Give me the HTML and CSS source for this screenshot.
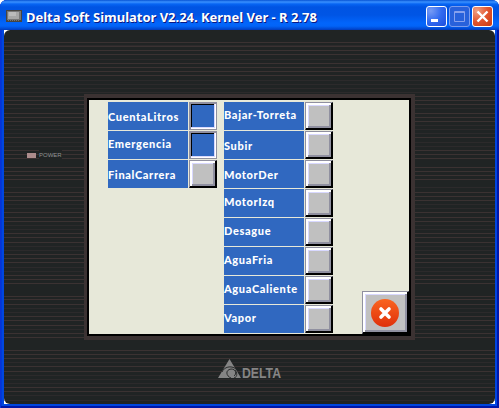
FILE: index.html
```html
<!DOCTYPE html>
<html lang="es">
<head>
<meta charset="utf-8">
<title>Delta Soft Simulator</title>
<link rel="stylesheet" href="styles.css">
</head>
<body>
<div class="window">
  <header class="titlebar">
    <svg class="app-icon" width="16" height="12" viewBox="0 0 16 12"><path fill="#474541" d="M0 0h16v12H0z"/><path fill="#777" d="M1 1h14v9H1z"/><path fill="#a7a7a7" d="M2 2h11v7H2z"/><path fill="#bbb" d="M3 2h7v4H3z"/><path stroke="#777" stroke-dasharray="1 1" d="M2 10.500h12"/></svg>
    <h1 class="title">Delta Soft Simulator V2.24. Kernel Ver - R 2.78</h1>
    <div class="controls">
      <button class="control" aria-label="Minimizar"><svg width="19" height="19"><path fill="#fff" d="M4 12h7v3H4z"/></svg></button>
      <button class="control disabled" aria-label="Maximizar"><svg width="19" height="19"><path fill="none" stroke="#87a1ed" d="M4.500 4.500h10v10h-10zM4 5.500h11"/></svg></button>
      <button class="control close" aria-label="Cerrar"><svg width="19" height="19"><path stroke="#fff" stroke-width="2.400" d="M4.500 4.500l10 10m0-10l-10 10"/></svg></button>
    </div>
  </header>
  <main class="device">
    <svg class="grooves" width="491" height="374" viewBox="4 30 491 374">
      <path stroke="#3b3232" d="M4 42.500h491M4 46.500h491M4 50.500h491M4 54.500h491M4 63.500h491M4 67.500h491M4 71.500h491M4 75.500h491M4 96.500h491M4 100.500h491M4 104.500h491M4 113.500h491M4 117.500h491M4 121.500h491M4 137.500h491M4 150.500h491M4 154.500h491M4 158.500h491M4 167.500h491M4 171.500h491M4 175.500h491M4 179.500h491M4 192.500h491M4 196.500h491M4 200.500h491M4 212.500h491M4 217.500h491M4 221.500h491M4 233.500h491M4 237.500h491M4 242.500h491M4 254.500h491M4 258.500h491M4 262.500h491M4 275.500h491M4 279.500h491M4 283.500h491M4 296.500h491M4 299.500h491M4 304.500h491M4 316.500h491M4 320.500h491M4 325.500h491M4 333.500h491M4 337.500h491M4 350.500h491M4 354.500h491M4 358.500h491M4 366.500h491M4 371.500h491M4 387.500h491M4 391.500h491"/>
      <path stroke="#2c2a2b" d="M4 45.500h491M4 59.500h491M4 80.500h491M4 84.500h491M4 88.500h491M4 92.500h491M4 108.500h491M4 125.500h491M4 129.500h491M4 133.500h491M4 142.500h491M4 146.500h491M4 187.500h491M4 204.500h491M4 208.500h491M4 225.500h491M4 229.500h491M4 246.500h491M4 250.500h491M4 267.500h491M4 271.500h491M4 308.500h491M4 312.500h491M4 329.500h491M4 362.500h491M4 375.500h491M4 379.500h491M4 383.500h491M4 395.500h491M4 400.500h491"/>
      <path fill="#202424" d="M84 340h331v9H84z"/>
    </svg>
    <div class="power"><i class="led"></i><span>POWER</span></div>
    <section class="screen">
      <div class="column">
        <div class="row"><span class="label low">CuentaLitros</span><button class="switch on"></button></div>
        <div class="row"><span class="label">Emergencia</span><button class="switch on"></button></div>
        <div class="row"><span class="label low">FinalCarrera</span><button class="switch"></button></div>
      </div>
      <div class="column">
        <div class="row"><span class="label">Bajar-Torreta</span><button class="switch"></button></div>
        <div class="row"><span class="label low">Subir</span><button class="switch"></button></div>
        <div class="row"><span class="label low">MotorDer</span><button class="switch"></button></div>
        <div class="row"><span class="label">MotorIzq</span><button class="switch"></button></div>
        <div class="row"><span class="label">Desague</span><button class="switch"></button></div>
        <div class="row"><span class="label">AguaFria</span><button class="switch"></button></div>
        <div class="row"><span class="label">AguaCaliente</span><button class="switch"></button></div>
        <div class="row"><span class="label">Vapor</span><button class="switch"></button></div>
      </div>
      <button class="exit" aria-label="Salir">
        <svg width="28" height="28" viewBox="0 0 28 28"><defs><linearGradient id="red" x2="0" y2="1"><stop stop-color="#fa6420"/><stop offset="1" stop-color="#df300a"/></linearGradient></defs><circle cx="14" cy="14" r="14" fill="url(#red)"/><path stroke="#fff" stroke-width="3.600" stroke-linecap="round" d="M10 10l8 8m0-8l-8 8"/></svg>
      </button>
    </section>
    <div class="brand">
      <svg width="24" height="20" viewBox="0 0 24 20"><path fill="#858585" d="M11.500 0L23 19H0z"/><g fill="none" stroke="#292b2b"><path d="M4 13c2-5 9-7 14-3M13 19c-5-2-6-8 0-9 5 0 6 5 3 7M16 19c4-1 3-6 1-8"/></g></svg>
      <svg class="wordmark" width="44" height="20"><text class="brand-name" x="0" y="15" textLength="39" lengthAdjust="spacingAndGlyphs">DELTA</text></svg>
    </div>
  </main>
</div>
</body>
</html>
```

FILE: styles.css
```css
* { box-sizing: border-box; }

body {
  margin: 0;
  background: #fff;
}

button {
  display: block;
  margin: 0;
  padding: 0;
  border: 0;
}

svg { display: block; }

.window {
  width: 499px;
  height: 408px;
  padding: 0 4px 4px;
  border-radius: 7px 7px 0 0;
  background: #0046df;
  box-shadow: inset 1px 0 #0831d9, inset -2px -2px #0016a8, inset 2px 0 #003ad6;
}

.titlebar {
  display: flex;
  align-items: center;
  height: 30px;
  margin: 0 -4px;
  padding: 3px 6px 0;
  border-radius: 7px 7px 0 0;
  background: linear-gradient(#0753d4 0, #3a91ff 2px, #0765f3 4px, #0054e3 7px, #0055e5 15px, #0265fb 23px, #0264f8 26px, #0147cf 29px, #0039b9 30px);
}

.app-icon { margin-top: -1px; }

.title {
  flex: 1;
  margin: 0 0 0 4px;
  font: 700 13px/20px "Noto Sans", sans-serif;
  letter-spacing: -0.02px;
  white-space: nowrap;
  color: #fff;
  text-shadow: 1px 1px #0a1883;
}

.controls {
  display: flex;
  gap: 2px;
}

.control {
  width: 21px;
  height: 21px;
  border: 1px solid #fff;
  border-radius: 3px;
  background: radial-gradient(circle at 20% 20%, #779bf4, #316af0 50%, #1c4ddd);
}

.control.disabled {
  border-color: #7b9cec;
  background: #2861db;
}

.control.close {
  background: radial-gradient(circle at 20% 20%, #f0a083, #e2552f 50%, #c93a10);
}

.device {
  display: flex;
  position: relative;
  height: 374px;
  background: #fff;
}

.grooves {
  position: absolute;
  inset: 0;
  border-radius: 6px;
  background: #202424;
}

.power {
  display: flex;
  position: relative;
  gap: 3px;
  align-items: center;
  width: 80px;
  height: 10px;
  margin-top: 120px;
  padding-left: 23px;
  font: 6px/10px "Liberation Sans", sans-serif;
  color: #939494;
}

.power span { background: #202424; }

.led {
  width: 9px;
  height: 5px;
  background: #ac8c8c;
}

.screen {
  display: flex;
  position: relative;
  gap: 7px;
  width: 331px;
  height: 246px;
  margin-top: 64px;
  padding: 4px 0 0 21px;
  border: 4px solid #3b3232;
  border-left-width: 3px;
  background: #e7e8d9;
  box-shadow: inset 0 0 0 2px #000;
}

.column {
  display: flex;
  flex-direction: column;
  gap: 1px;
}

.row {
  display: flex;
  gap: 1px;
  height: 28px;
}

.label {
  width: 80px;
  height: 28px;
  background: #3068c0;
  color: #fff;
  font: 900 11px/25px Lato, sans-serif;
  letter-spacing: 0.65px;
  white-space: nowrap;
}

.label.low { padding-top: 2px; }

.switch {
  width: 28px;
  height: 28px;
  border: 1px solid;
  border-color: #9090a0 #000 #000 #9090a0;
  background: #c0c0c0;
  box-shadow: inset -1px -1px #000, inset 2px 2px #fff, inset -3px -3px #9090a0, inset 3px 3px #d8d8ff;
}

.switch.on {
  border-color: #9090a0;
  background: #3068c0;
  box-shadow: inset 1px 1px #9090a0, inset -1px -1px #fff, inset -2px -2px #d8d8ff, inset 2px 2px #000;
}

.exit {
  display: grid;
  place-items: center;
  position: absolute;
  right: 2px;
  bottom: 2px;
  width: 47px;
  height: 43px;
  padding-right: 2px;
  border: 1px solid;
  border-color: #9090a0 #000 #000 #9090a0;
  background: #c0c0c0;
  box-shadow: inset -1px -1px #000, inset 2px 2px #fff, inset -3px -3px #9090a0, inset 3px 3px #d8d8ff;
}

.brand {
  display: flex;
  position: absolute;
  align-items: flex-end;
  left: 214px;
  top: 329px;
}

.wordmark { margin-bottom: -4px; }

.brand-name {
  font: 700 14px "Liberation Sans", sans-serif;
  fill: #858585;
}
```
